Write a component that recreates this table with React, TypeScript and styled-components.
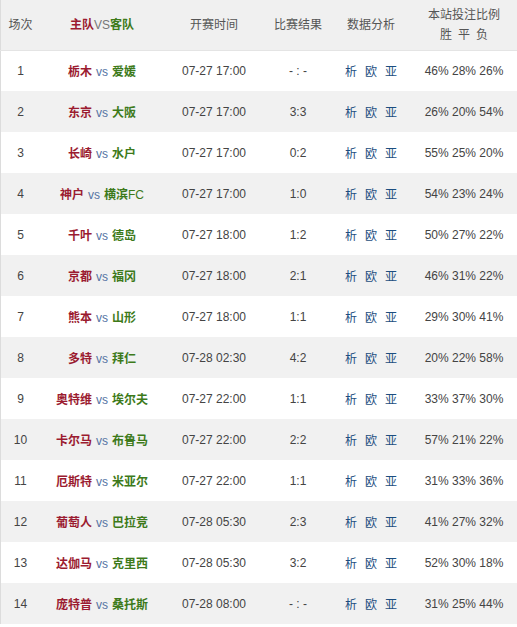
import styled, { createGlobalStyle } from "styled-components";

const GlobalStyle = createGlobalStyle`
  body {
    margin: 0;
    background: #fff;
    font-family: "Liberation Sans", "Noto Sans CJK SC", sans-serif;
    font-size: 12px;
    color: #444;
  }
`;

type Match = {
  home: string;
  away: string;
  suffix?: string;
  time: string;
  score: string;
  odds: string;
};

const matches: Match[] = [
  { home: "栃木", away: "爱媛", time: "07-27 17:00", score: "- : -", odds: "46% 28% 26%" },
  { home: "东京", away: "大阪", time: "07-27 17:00", score: "3:3", odds: "26% 20% 54%" },
  { home: "长崎", away: "水户", time: "07-27 17:00", score: "0:2", odds: "55% 25% 20%" },
  { home: "神户", away: "横滨", suffix: "FC", time: "07-27 17:00", score: "1:0", odds: "54% 23% 24%" },
  { home: "千叶", away: "德岛", time: "07-27 18:00", score: "1:2", odds: "50% 27% 22%" },
  { home: "京都", away: "福冈", time: "07-27 18:00", score: "2:1", odds: "46% 31% 22%" },
  { home: "熊本", away: "山形", time: "07-27 18:00", score: "1:1", odds: "29% 30% 41%" },
  { home: "多特", away: "拜仁", time: "07-28 02:30", score: "4:2", odds: "20% 22% 58%" },
  { home: "奥特维", away: "埃尔夫", time: "07-27 22:00", score: "1:1", odds: "33% 37% 30%" },
  { home: "卡尔马", away: "布鲁马", time: "07-27 22:00", score: "2:2", odds: "57% 21% 22%" },
  { home: "厄斯特", away: "米亚尔", time: "07-27 22:00", score: "1:1", odds: "31% 33% 36%" },
  { home: "葡萄人", away: "巴拉竞", time: "07-28 05:30", score: "2:3", odds: "41% 27% 32%" },
  { home: "达伽马", away: "克里西", time: "07-28 05:30", score: "3:2", odds: "52% 30% 18%" },
  { home: "庞特普", away: "桑托斯", time: "07-28 08:00", score: "- : -", odds: "31% 25% 44%" },
];

const Table = styled.table`
  width: 517px;
  border-collapse: collapse;
  table-layout: fixed;
  border-left: 1px solid #dcdcdc;
`;

const HeadRow = styled.tr`
  background: #f0f0f0;
  height: 50px;
  border-bottom: 1px solid #e4e4e4;
`;

const Th = styled.th<{ $w: number }>`
  width: ${(p) => p.$w}px;
  font-weight: normal;
  color: #555;
  text-align: center;
  padding: 0;
  line-height: 20px;
`;

const Row = styled.tr<{ $shade: boolean }>`
  height: 41px;
  background: ${(p) => (p.$shade ? "#f1f1f1" : "#fff")};
`;

const Td = styled.td`
  text-align: center;
  padding: 0;
  color: #444;
`;

const Home = styled.span`
  color: #9b1b30;
  font-weight: bold;
`;

const Away = styled.span`
  color: #3d7a1a;
  font-weight: bold;
`;

const Suffix = styled.span`
  color: #3d7a1a;
`;

const Vs = styled.span<{ $upper?: boolean }>`
  color: ${(p) => (p.$upper ? "#777" : "#5573a3")};
  margin: 0 ${(p) => (p.$upper ? 0 : 4)}px;
`;

const Links = styled.span`
  display: inline-flex;
  gap: 8px;
  color: #1c4e80;
`;

const Sub = styled.div`
  letter-spacing: 6px;
  margin-right: -6px;
`;

export default function App() {
  return (
    <>
      <GlobalStyle />
      <Table>
        <thead>
          <HeadRow>
            <Th $w={39}>场次</Th>
            <Th $w={124}>
              <Home>主队</Home>
              <Vs $upper>VS</Vs>
              <Away>客队</Away>
            </Th>
            <Th $w={100}>开赛时间</Th>
            <Th $w={68}>比赛结果</Th>
            <Th $w={78}>数据分析</Th>
            <Th $w={108}>
              <div>本站投注比例</div>
              <Sub>胜平负</Sub>
            </Th>
          </HeadRow>
        </thead>
        <tbody>
          {matches.map((m, i) => (
            <Row key={i} $shade={i % 2 === 1}>
              <Td>{i + 1}</Td>
              <Td>
                <Home>{m.home}</Home>
                <Vs>vs</Vs>
                <Away>{m.away}</Away>
                {m.suffix && <Suffix>{m.suffix}</Suffix>}
              </Td>
              <Td>{m.time}</Td>
              <Td>{m.score}</Td>
              <Td>
                <Links>
                  <span>析</span>
                  <span>欧</span>
                  <span>亚</span>
                </Links>
              </Td>
              <Td>{m.odds}</Td>
            </Row>
          ))}
        </tbody>
      </Table>
    </>
  );
}
